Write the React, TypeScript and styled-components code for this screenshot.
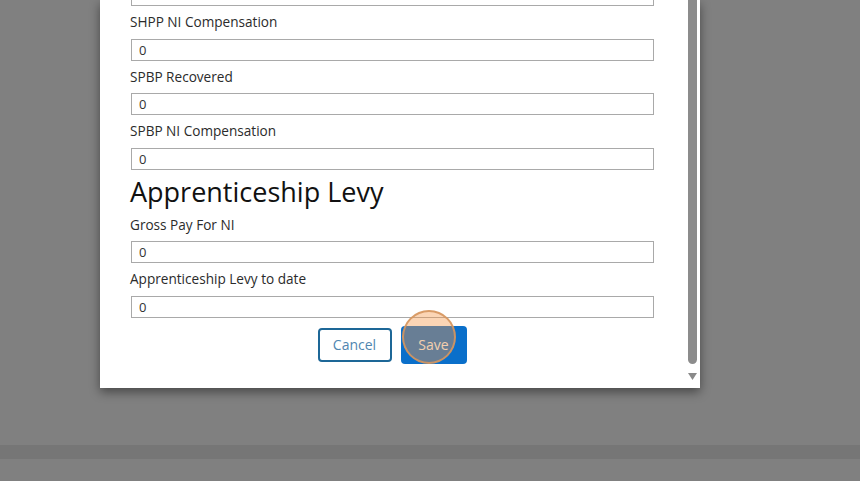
import React from 'react';
import styled, {createGlobalStyle} from 'styled-components';

const GlobalStyle = createGlobalStyle`
    html, body {
        margin: 0;
        padding: 0;
        background: #808080;
        font-family: "Open Sans", "Noto Sans", Arial, sans-serif;
        overflow: hidden;
    }
`

type Field = {
    label: string
    value: string
}

const statutoryFields: Field[] = [
    {label: 'SHPP NI Compensation', value: '0'},
    {label: 'SPBP Recovered', value: '0'},
    {label: 'SPBP NI Compensation', value: '0'},
]

const levyFields: Field[] = [
    {label: 'Gross Pay For NI', value: '0'},
    {label: 'Apprenticeship Levy to date', value: '0'},
]

const FormField = ({label, value}: Field) => (
    <FieldWrapper>
        <Label>{label}</Label>
        <Input type="text" defaultValue={value}/>
    </FieldWrapper>
)

export default function App() {
    return (
        <Page>
            <GlobalStyle/>
            <Backdrop/>
            <Band/>
            <Rest/>

            <Modal>
                <Content>
                    <Input type="text" defaultValue="0"/>
                    {statutoryFields.map(f => <FormField key={f.label} {...f}/>)}
                    <Heading>Apprenticeship Levy</Heading>
                    {levyFields.map(f => <FormField key={f.label} {...f}/>)}

                    <Buttons>
                        <CancelButton>Cancel</CancelButton>
                        <SaveButton>
                            Save
                            <ClickMarker/>
                        </SaveButton>
                    </Buttons>
                </Content>

                <Scrollbar>
                    <Thumb/>
                    <Arrow>
                        <svg width="9" height="7" viewBox="0 0 9 7">
                            <path d="M0 0 H9 L4.5 7 Z" fill="#8a8a8a"/>
                        </svg>
                    </Arrow>
                </Scrollbar>
            </Modal>
        </Page>
    );
}

const Page = styled.div`
    position: relative;
    width: 860px;
    height: 481px;
    overflow: hidden;
    display: flex;
    flex-direction: column;
`

const Backdrop = styled.div`
    height: 445px;
    background: #808080;
`

const Band = styled.div`
    height: 14px;
    background: #767676;
`

const Rest = styled.div`
    flex: 1;
    background: #808080;
`

const Modal = styled.div`
    position: absolute;
    left: 100px;
    top: 0;
    width: 600px;
    height: 388px;
    background: #fff;
    box-shadow: 0 4px 10px rgba(0, 0, 0, 0.45);
    display: flex;
    overflow: hidden;
`

const Content = styled.div`
    flex: 1;
    margin-top: -16px;
    padding-left: 30px;
    display: flex;
    flex-direction: column;
    align-items: flex-start;
`

const FieldWrapper = styled.div`
    display: flex;
    flex-direction: column;
    align-items: flex-start;
`

const Label = styled.label`
    margin-top: 6px;
    margin-bottom: 6.5px;
    font-size: 13.6px;
    line-height: 20px;
    color: #2b2b2b;
`

const Input = styled.input`
    box-sizing: border-box;
    margin: 0 0 0 1px;
    width: 523px;
    height: 22px;
    padding: 0 7px;
    border: 1px solid #a9a9a9;
    border-radius: 0;
    font-family: "Open Sans", "Noto Sans", Arial, sans-serif;
    font-size: 13px;
    color: #333;
    background: #fff;
    outline: none;
`

const Heading = styled.h2`
    margin: 5px 0 0;
    font-size: 27px;
    line-height: 34px;
    font-weight: 400;
    color: #111;
`

const Buttons = styled.div`
    align-self: stretch;
    margin-top: 8px;
    margin-left: -34px;
    height: 38px;
    display: flex;
    justify-content: center;
    align-items: center;
    gap: 9px;
`

const CancelButton = styled.button`
    box-sizing: border-box;
    width: 74px;
    height: 34px;
    border: 2px solid #1d6797;
    border-radius: 4px;
    background: #fff;
    color: #4f86b0;
    font-family: "Open Sans", "Noto Sans", Arial, sans-serif;
    font-size: 14px;
    padding: 0;
`

const SaveButton = styled.button`
    position: relative;
    box-sizing: border-box;
    width: 66px;
    height: 38px;
    border: none;
    border-radius: 4px;
    background: #0a6fca;
    color: #f4f4f4;
    font-family: "Open Sans", "Noto Sans", Arial, sans-serif;
    font-size: 14px;
    padding: 0;
`

const ClickMarker = styled.span`
    position: absolute;
    left: 1px;
    top: -16px;
    width: 54px;
    height: 54px;
    box-sizing: border-box;
    border-radius: 50%;
    border: 2px solid rgba(214, 150, 95, 0.9);
    background: rgba(245, 150, 70, 0.4);
    pointer-events: none;
`

const Scrollbar = styled.div`
    width: 12px;
    display: flex;
    flex-direction: column;
    align-items: flex-start;
`

const Thumb = styled.div`
    width: 9px;
    height: 364px;
    flex-shrink: 0;
    background: #8c8c8c;
    border-radius: 0 0 5px 5px;
`

const Arrow = styled.div`
    margin-top: 9px;
    line-height: 0;
`
